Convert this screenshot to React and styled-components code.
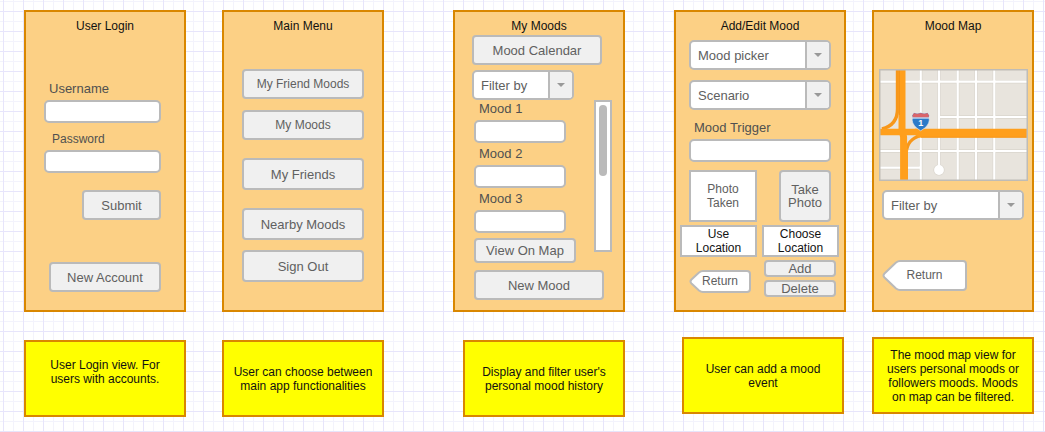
import React from "react";
import styled, { createGlobalStyle } from "styled-components";

const line = "#bababa";
const accent = "#d98700";

const GlobalStyle = createGlobalStyle`
  * { box-sizing: border-box; }
  body {
    margin: 0;
    font: 12px/14px "Liberation Sans", Arial, sans-serif;
    color: #111;
    background-color: #fff;
    background-image:
      linear-gradient(to right, #e7e5fb 1px, transparent 1px),
      linear-gradient(to bottom, #e7e5fb 1px, transparent 1px),
      linear-gradient(to right, #f3f3fc 1px, transparent 1px),
      linear-gradient(to bottom, #f3f3fc 1px, transparent 1px);
    background-size: 20px 20px;
    background-position: 3px 11px, 3px 11px, 13px 1px, 13px 1px;
  }
`;

const Board = styled.main`
  display: flex;
  align-items: flex-start;
  padding: 10px 11px 15px 24px;
`;

const Column = styled.div`
  display: flex;
  flex-direction: column;
  flex: 1 1 ${(p) => p.$basis || 162}px;
  min-width: 0;
  margin-left: ${(p) => p.$before || 0}px;
`;

const Screen = styled.section`
  display: flex;
  flex-direction: column;
  min-height: 302px;
  padding-top: 7px;
  border: 2px solid ${accent};
  background: #fcd085;
`;

const Title = styled.h2`
  margin: 0;
  font-size: 12px;
  line-height: 14px;
  font-weight: normal;
  text-align: center;
`;

const Note = styled.p`
  display: flex;
  align-items: ${(p) => (p.$raised ? "flex-start" : "center")};
  justify-content: center;
  min-height: 77px;
  margin: ${(p) => p.$margin};
  padding: ${(p) => (p.$raised ? "16px 18px" : "0 8px")};
  border: 2px solid ${accent};
  background: #ffff00;
  text-align: center;
`;

const Stack = styled.div`
  display: flex;
  flex-direction: column;
  flex: ${(p) => (p.$grow ? "1" : "none")};
  min-width: 0;
  gap: ${(p) => p.$gap || 0}px;
  margin-top: ${(p) => p.$top || 0}px;
  padding: ${(p) => p.$pad || 0};
`;

const Row = styled.div`
  display: flex;
  align-items: flex-start;
  justify-content: space-between;
  gap: ${(p) => p.$gap || 0}px;
  margin-top: ${(p) => p.$top || 0}px;
  padding: ${(p) => p.$pad || 0};
`;

const Button = styled.button`
  width: ${(p) => (p.$w ? `${p.$w}px` : "auto")};
  height: ${(p) => p.$h || 30}px;
  align-self: ${(p) => p.$align || "stretch"};
  padding: 0;
  border: 2px solid ${line};
  border-radius: 4px;
  background: #f0f0f0;
  color: #606060;
  font: ${(p) => (p.$small ? 12 : 13)}px/13px "Liberation Sans", Arial, sans-serif;
`;

const PlainButton = styled.button`
  flex: 1;
  height: 32px;
  padding: 0 10px;
  border: 2px solid ${line};
  background: #fff;
  color: #111;
  font: 12px/14px "Liberation Sans", Arial, sans-serif;
`;

const PhotoBox = styled.div`
  display: flex;
  align-items: center;
  width: 68px;
  height: 52px;
  padding: 0 14px;
  border: 2px solid ${line};
  background: #fff;
  color: #606060;
  text-align: center;
`;

const FieldBox = styled.div`
  display: flex;
  flex-direction: column;
  gap: 3px;
`;

const Label = styled.label`
  padding-left: ${(p) => (p.$small ? 8 : 5)}px;
  font-size: ${(p) => (p.$small ? 12 : 13)}px;
  line-height: 16px;
  color: #505050;
`;

const Input = styled.input`
  width: 100%;
  height: 23px;
  padding: 0 6px;
  border: 2px solid ${line};
  border-radius: 5px;
  background: #fff;
  font: 13px "Liberation Sans", Arial, sans-serif;
`;

const SelectBox = styled.div`
  display: flex;
  width: ${(p) => (p.$w ? `${p.$w}px` : "auto")};
  height: 30px;
  overflow: hidden;
  border: 2px solid ${line};
  border-radius: 5px;
  background: #fff;
`;

const NativeSelect = styled.select`
  appearance: none;
  flex: 1;
  min-width: 0;
  padding: 0 0 0 7px;
  border: 0;
  background: transparent;
  color: #606060;
  font: 13px "Liberation Sans", Arial, sans-serif;
`;

const Arrow = styled.span`
  display: flex;
  align-items: center;
  justify-content: center;
  width: 24px;
  border-left: 2px solid ${line};
  background: #f0f0f0;
  &::after {
    content: "";
    border: 4px solid transparent;
    border-top-color: #999;
    border-bottom: 0;
  }
`;

const ScrollTrack = styled.div`
  width: 18px;
  height: 152px;
  padding: 3px;
  border: 2px solid ${line};
  background: #fff;
`;

const ScrollThumb = styled.div`
  height: 71px;
  border-radius: 4px;
  background: ${line};
`;

const TagButton = styled.button`
  position: relative;
  width: ${(p) => p.$w}px;
  height: ${(p) => p.$h}px;
  margin-top: ${(p) => p.$top || 0}px;
  padding: 0 0 2px;
  border: 0;
  background: none;
  color: #606060;
  font: 12px/14px "Liberation Sans", Arial, sans-serif;
  svg { position: absolute; inset: 0; }
  span { position: relative; }
`;

const MapSvg = styled.svg`
  display: block;
  width: 100%;
  height: auto;
`;

function Field({ id, label, small, type = "text" }) {
  return (
    <FieldBox>
      <Label htmlFor={id} $small={small}>{label}</Label>
      <Input id={id} type={type} />
    </FieldBox>
  );
}

function Select({ label, w }) {
  return (
    <SelectBox $w={w}>
      <NativeSelect aria-label={label}>
        <option>{label}</option>
      </NativeSelect>
      <Arrow />
    </SelectBox>
  );
}

function ReturnButton({ w, h, shoulder, top }) {
  const mid = h / 2;
  const r = w - 1;
  const b = h - 1;
  const d = `M${shoulder + 2} 1 H${r - 3} Q${r} 1 ${r} 4 V${b - 3} Q${r} ${b} ${r - 3} ${b} H${shoulder + 2}
    Q${shoulder} ${b} ${shoulder - 2} ${b - 1.5} L2.5 ${mid + 2} Q0.5 ${mid} 2.5 ${mid - 2}
    L${shoulder - 2} 2.5 Q${shoulder} 1 ${shoulder + 2} 1Z`;
  return (
    <TagButton $w={w} $h={h} $top={top}>
      <svg width={w} height={h} aria-hidden="true">
        <path d={d} fill="#fff" stroke={line} strokeWidth="2" />
      </svg>
      <span>Return</span>
    </TagButton>
  );
}

function StreetMap() {
  const streets =
    "M1 12.7H148 M60 48H148 M1 82H148 M1 98.7H42 M41.7 1V111 M60 1V100 M78.7 1V111 M97 1V111 M115.3 1V111";
  return (
    <MapSvg viewBox="0 0 149 112" role="img" aria-label="Street map">
      <rect width="149" height="112" fill="#e8e4dd" />
      <path d={streets} fill="none" stroke="#d9d5cd" strokeWidth="3.4" />
      <circle cx="60" cy="101" r="5.6" fill="#d9d5cd" />
      <path d={streets} fill="none" stroke="#fff" strokeWidth="2.2" />
      <circle cx="60" cy="101" r="4.9" fill="#fff" />
      <g fill="none" stroke="#ff9f1c">
        <path d="M18.5 1V40Q18.5 56 3 60" stroke="#f7971a" strokeWidth="3.4" />
        <path d="M27.3 95V84Q28 70 42 66.5" stroke="#f7971a" strokeWidth="3.2" />
        <path d="M23 1V60L24.6 68V111" strokeWidth="7" />
        <path d="M26.2 80V111" strokeWidth="5.6" />
        <path d="M1 63H40" strokeWidth="6.4" />
      </g>
      <path d="M36 59.8H148V68.6H40L36 66Z" fill="#ff9f1c" />
      <path d="M42 68.2H148" stroke="#f7971a" strokeWidth="1" />
      <path d="M20.4 1V46" stroke="#ee8d14" strokeWidth="0.7" />
      <path
        d="M35 43.7Q38 45.3 41.7 43.7Q45.4 45.3 48.5 43.7L50.3 46.5Q49.3 48 50.3 51Q50 57 41.7 61.8Q33.5 57 33.1 51Q34.1 48 33.1 46.5Z"
        fill="#2c7ac8"
        stroke="#e6e9ee"
        strokeWidth="0.6"
      />
      <path d="M35 43.9Q38 45.5 41.7 43.9Q45.4 45.5 48.5 43.9L50 46.4L49.6 48.5H33.8L33.4 46.4Z" fill="#d9656a" />
      <path d="M33.6 49H49.8" stroke="#fff" strokeWidth="1" />
      <text x="41.8" y="57.4" fill="#fff" fontSize="9" fontWeight="bold" textAnchor="middle">1</text>
      <rect x="0.75" y="0.75" width="147.5" height="110.5" fill="none" stroke="#bfbcb6" strokeWidth="1.5" />
    </MapSvg>
  );
}

export default function App() {
  return (
    <>
      <GlobalStyle />
      <Board>
        <Column>
          <Screen>
            <Title>User Login</Title>
            <Stack $top={48} $gap={8} $pad="0 23px 0 18px">
              <Field id="username" label="Username" />
              <Field id="password" label="Password" small type="password" />
            </Stack>
            <Stack $top={17} $gap={42} $pad="0 23px 0 18px">
              <Button $w={79} $align="flex-end">Submit</Button>
              <Button $w={112} $align="flex-end">New Account</Button>
            </Stack>
          </Screen>
          <Note $raised $margin="28px 0 0">User Login view. For users with accounts.</Note>
        </Column>

        <Column $before={36}>
          <Screen>
            <Title>Main Menu</Title>
            <Stack $top={36} $gap={11} $pad="0 18px">
              <Button $small>My Friend Moods</Button>
              <Button $small>My Moods</Button>
            </Stack>
            <Stack $top={18} $gap={18} $pad="0 18px">
              <Button $h={32}>My Friends</Button>
              <Button $h={32}>Nearby Moods</Button>
            </Stack>
            <Stack $top={10} $pad="0 18px">
              <Button $h={32}>Sign Out</Button>
            </Stack>
          </Screen>
          <Note $margin="28px 0 0">User can choose between main app functionalities</Note>
        </Column>

        <Column $basis={172} $before={69}>
          <Screen>
            <Title>My Moods</Title>
            <Stack $top={2} $gap={5} $pad="0 21px 0 17px">
              <Button>Mood Calendar</Button>
              <Select label="Filter by" w={102} />
            </Stack>
            <Row $gap={18} $pad="0 11px 0 19px">
              <Stack $grow $top={1} $gap={5}>
                <Stack $gap={3} $pad="0 10px 0 0">
                  <Field id="mood1" label="Mood 1" />
                  <Field id="mood2" label="Mood 2" />
                  <Field id="mood3" label="Mood 3" />
                </Stack>
                <Button $h={25}>View On Map</Button>
              </Stack>
              <ScrollTrack role="scrollbar" aria-label="Moods" aria-controls="mood1" aria-valuenow={0}>
                <ScrollThumb />
              </ScrollTrack>
            </Row>
            <Stack $top={7} $pad="0 19px">
              <Button>New Mood</Button>
            </Stack>
          </Screen>
          <Note $margin="28px 0 0 10px">Display and filter user's personal mood history</Note>
        </Column>

        <Column $basis={172} $before={49}>
          <Screen>
            <Title>Add/Edit Mood</Title>
            <Stack $top={7} $gap={10} $pad="0 13px">
              <Select label="Mood picker" />
              <Select label="Scenario" />
              <Field id="trigger" label="Mood Trigger" />
            </Stack>
            <Row $top={8} $pad="0 13px">
              <PhotoBox>Photo Taken</PhotoBox>
              <Button $w={52} $h={52}>Take Photo</Button>
            </Row>
            <Row $top={3} $gap={5} $pad="0 5px 0 4px">
              <PlainButton>Use Location</PlainButton>
              <PlainButton>Choose Location</PlainButton>
            </Row>
            <Row $top={3} $pad="0 8px 0 13px">
              <ReturnButton w={62} h={23} shoulder={12} top={10} />
              <Stack $gap={3}>
                <Button $w={72} $h={17}>Add</Button>
                <Button $w={72} $h={17}>Delete</Button>
              </Stack>
            </Row>
          </Screen>
          <Note $margin="25px 2px 0 8px">User can add a mood event</Note>
        </Column>

        <Column $before={26}>
          <Screen>
            <Title>Mood Map</Title>
            <Stack $top={36} $pad="0 4px 0 5px">
              <StreetMap />
            </Stack>
            <Stack $top={9} $gap={40} $pad="0 8px">
              <Select label="Filter by" />
              <ReturnButton w={85} h={31} shoulder={16} />
            </Stack>
          </Screen>
          <Note $margin="25px 0 0">
            The mood map view for users personal moods or followers moods. Moods on map can be filtered.
          </Note>
        </Column>
      </Board>
    </>
  );
}
